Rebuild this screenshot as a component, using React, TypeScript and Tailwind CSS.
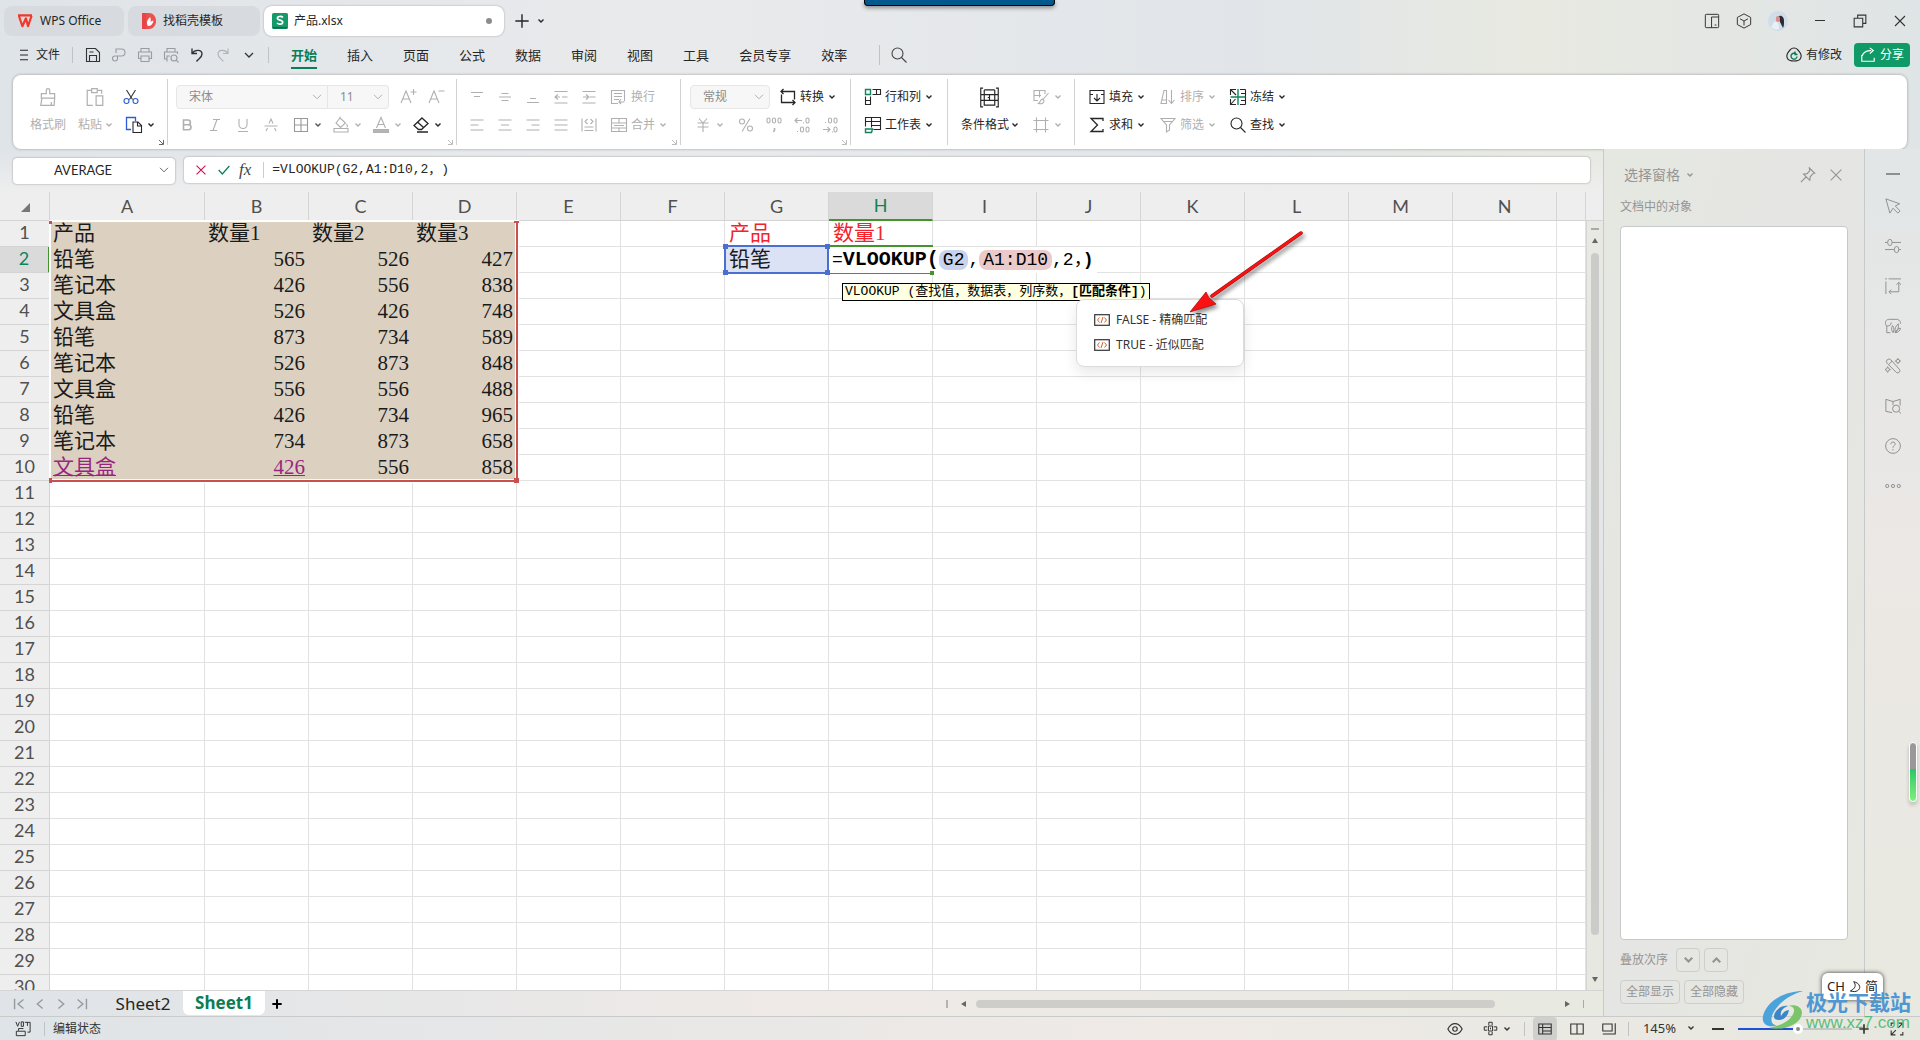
import React, { type ReactNode } from "react";

type IconProps = {
  children: ReactNode;
  className?: string;
};

const Icon = ({ children, className = "size-[18px]" }: IconProps) => (
  <svg
    viewBox="0 0 18 18"
    fill="none"
    stroke="currentColor"
    strokeWidth="1.1"
    className={`shrink-0 ${className}`}
    aria-hidden="true"
  >
    {children}
  </svg>
);

const Chevron = ({ className = "h-1 w-[6px]" }: { className?: string }) => (
  <svg
    viewBox="0 0 6 4"
    fill="none"
    stroke="currentColor"
    strokeWidth="1.4"
    className={`shrink-0 ${className}`}
    aria-hidden="true"
  >
    <path d="M.5.5 3 3 5.5.5" />
  </svg>
);

const WideChevron = () => (
  <svg
    viewBox="0 0 10 6"
    fill="none"
    stroke="currentColor"
    className="pointer-events-none absolute right-[6px] top-1/2 h-[6px] w-[10px] -translate-y-1/2"
    aria-hidden="true"
  >
    <path d="M1 .8 5 4.8 9 .8" />
  </svg>
);

const icons = {
  save: (
    <Icon>
      <path d="M2.5 2.5h9l4 4v9h-13zM5.5 15.500v-6h7v6M5.500 6h4" />
    </Icon>
  ),
  exportPdf: (
    <Icon>
      <path d="M6 7V3h5.500a3.500 3.500 0 0 1 0 7H5a2.500 2.500 0 1 0 2.500 2.500V10" />
    </Icon>
  ),
  print: (
    <Icon>
      <path d="M5 6V2.500h8V6M5 12.500H2.500V6h13v6.500H13M5 10h8v5.500H5z" />
    </Icon>
  ),
  preview: (
    <Icon>
      <path d="M5 6V2.500h8V6M5 13H2.500V6h13v2M5 15.500V10h3" />
      <circle cx="12" cy="12" r="3" />
      <path d="m14.200 14.200 2.300 2.300" />
    </Icon>
  ),
  undo: (
    <Icon>
      <path strokeWidth="1.4" d="M4 2.500v5h5M4 7.500C7 3 14 3.500 14 8c0 3.500-3 4.500-5.500 7.500" />
    </Icon>
  ),
  redo: (
    <Icon>
      <path d="M14 2.500v5H9M14 7.500C11 3 4 3.500 4 8c0 3.500 3 4.500 5.500 7.500" />
    </Icon>
  ),
  search: (
    <Icon>
      <circle cx="7.500" cy="7.500" r="5.500" />
      <path d="m11.500 11.500 5 5" />
    </Icon>
  ),
  brush: (
    <Icon className="size-5">
      <path d="M7.500 6V3a1.500 1.500 0 0 1 3 0v3h4.500v4H3V6zM3.500 10l-1 6.500h12l.5-6.500M12 16.500v-3" />
    </Icon>
  ),
  paste: (
    <Icon className="size-5">
      <path d="M6 3H2v13.500h5M6 1.500h5V5H6zM11 3h4v3M10 8h6v8.500h-6z" />
    </Icon>
  ),
  cut: (
    <Icon>
      <path d="m4.500 2 6 9.500M13.500 2l-6 9.500" stroke="#333" />
      <circle cx="4.500" cy="13" r="2.500" stroke="#2b5bd7" />
      <circle cx="13.500" cy="13" r="2.500" stroke="#2b5bd7" />
    </Icon>
  ),
  copy: (
    <Icon>
      <path d="M6 13.500H1.500v-12h9V5" stroke="#2b5bd7" strokeWidth="1.300" />
      <path d="M8 6h5l3.500 3.500v7H8zM12.500 6v4h4" />
    </Icon>
  ),
  growFont: (
    <Icon>
      <path d="M2 15 7 3l5 12M4 11h6M11.500 4h6M14.500 1v6" />
    </Icon>
  ),
  shrinkFont: (
    <Icon>
      <path d="M2 15 7 3l5 12M4 11h6M11.500 3h6" />
    </Icon>
  ),
  bold: (
    <Icon>
      <path strokeWidth="1.600" d="M5.500 4H10a2.300 2.300 0 0 1 0 4.800H5.500zM5.500 8.800h5a2.500 2.500 0 0 1 0 5h-5z" />
    </Icon>
  ),
  italic: (
    <Icon>
      <path d="M7 3.500h7M4 14.500h7M11 3.500l-4 11" />
    </Icon>
  ),
  underline: (
    <Icon>
      <path d="M5 3v5.500a4 4 0 0 0 8 0V3M4 15.500h10" />
    </Icon>
  ),
  strike: (
    <Icon>
      <path d="M2.500 10h13M7 7.500l2-4.500 2 4.500M5.500 12 4 15M12.500 12l1.500 3" />
    </Icon>
  ),
  borders: (
    <Icon>
      <path d="M2.500 2.500h13v13h-13zM9 2.500v13M2.500 9h13" />
    </Icon>
  ),
  fill: (
    <Icon>
      <path d="m8 2 5.500 5-5 4.500L4 7zM8 2V.5M14.500 8c1.500 2 1 3-.2 3M2 12.500h14v3.500H2z" />
    </Icon>
  ),
  fontColor: (
    <Icon>
      <path d="M4.500 12 9 1.500 13.500 12M6 8.500h6" />
      <path d="M1.500 13.500h15v3h-15z" fill="#b5b5b5" />
    </Icon>
  ),
  eraser: (
    <Icon>
      <path strokeWidth="1.300" d="m10 2 6 5.500-6.500 6H6.500L2 9.500zM5.500 6l6 5.500M5 16h11" />
    </Icon>
  ),
  top: (
    <Icon>
      <path d="M3 4.500h12M6 8.500h6" />
    </Icon>
  ),
  middle: (
    <Icon>
      <path d="M5.500 5.500h7M3 9h12M5.500 12.500h7" />
    </Icon>
  ),
  bottom: (
    <Icon>
      <path d="M6 10.500h6M3 14.500h12" />
    </Icon>
  ),
  outdent: (
    <Icon>
      <path d="M2.500 3.500h13M2.500 15h13M3 9h5M10 9h5.500M6 6.500 3 9l3 2.500" />
    </Icon>
  ),
  indent: (
    <Icon>
      <path d="M2.500 3.500h13M2.500 15h13M3 9h5M10 9h5.500M6 6.500 9 9l-3 2.500" />
    </Icon>
  ),
  wrap: (
    <Icon>
      <path d="M8 15.500H1.500v-13h13V13M4 5.500h8M4 8.500h8M4 11.500h5M11 11l-2 3h5.500M9 14l2 2" />
    </Icon>
  ),
  left: (
    <Icon>
      <path d="M2.500 4h13M2.500 9h8M2.500 14h13" />
    </Icon>
  ),
  center: (
    <Icon>
      <path d="M2.500 4h13M5 9h8M2.500 14h13" />
    </Icon>
  ),
  right: (
    <Icon>
      <path d="M2.500 4h13M7.500 9h8M2.500 14h13" />
    </Icon>
  ),
  justify: (
    <Icon>
      <path d="M2.500 4h13M2.500 9h13M2.500 14h13" />
    </Icon>
  ),
  distribute: (
    <Icon>
      <path d="M2 2.500v13M16 2.500v13M7.500 3 5 5.500 7.500 8M10.500 3 13 5.500 10.500 8M4.500 11h9M4.500 14.500h9" />
    </Icon>
  ),
  merge: (
    <Icon>
      <path d="M1.500 2.500h15v13h-15zM1.500 7h15M1.500 12h15M9 2.500V7M9 12v3.500M4 9.500h10" />
    </Icon>
  ),
  convert: (
    <Icon>
      <path strokeWidth="1.300" d="M4.500 1 2 3.500 4.500 6M2 3.500h13.500v8M2.500 6.500v8H16M13.500 12l2.500 2.500-2.500 2.500" />
    </Icon>
  ),
  yen: (
    <Icon>
      <path d="m5 2.500 4 4.500 4-4.500M3.500 7h11M3.500 11h11M9 7v9" />
    </Icon>
  ),
  percent: (
    <Icon>
      <circle cx="5" cy="5.500" r="2.500" />
      <circle cx="13" cy="12.500" r="2.500" />
      <path d="M13 2.500 5 15.500" />
    </Icon>
  ),
  comma: (
    <Icon>
      <rect x="2" y="2" width="3" height="5" rx="1.500" />
      <rect x="7.500" y="2" width="3" height="5" rx="1.500" />
      <rect x="13" y="2" width="3" height="5" rx="1.500" />
      <path strokeWidth="1.600" d="M9.500 12v2l-1 2" />
    </Icon>
  ),
  addDecimal: (
    <Icon>
      <path d="M2 4.500h7M4.500 2 2 4.500 4.500 7M4 15.500h1M10 7h1" />
      <rect x="13" y="2" width="3" height="5" rx="1.500" />
      <rect x="7.500" y="11" width="3" height="5" rx="1.500" />
      <rect x="13" y="11" width="3" height="5" rx="1.500" />
    </Icon>
  ),
  removeDecimal: (
    <Icon>
      <path d="M2 13.500h7M6.500 11 9 13.500 6.500 16M4 6.500h1M11 16h1" />
      <rect x="7.500" y="2" width="3" height="5" rx="1.500" />
      <rect x="13" y="2" width="3" height="5" rx="1.500" />
      <rect x="13" y="11" width="3" height="5" rx="1.500" />
    </Icon>
  ),
  rowsCols: (
    <Icon>
      <path d="M8.500 1.500h8v5h-8M12.500 1.500v5M1.500 8.500v8h5v-8M1.500 12.500h5" />
      <path d="M1.500 1.500h5v5h-5z" stroke="#12835a" strokeWidth="1.400" />
    </Icon>
  ),
  worksheet: (
    <Icon>
      <path d="M1.500 10.500v-9h15v12h-7M1.500 5.500h15M7.500 1.500v10M7.500 9.500h9" />
      <path d="M1.500 13h7l-1 3.500h-6z" stroke="#12835a" strokeWidth="1.400" />
    </Icon>
  ),
  condFormat: (
    <Icon className="size-[21px]">
      <path
        strokeWidth="1"
        d="M3.500 1h-2v16h2M14.500 1h2v16h-2M1.500 6.500h3M1.500 11.500h3M13.500 6.500h3M13.500 11.500h3M4.500 2.500h9M4.500 2.500v4h9v-4M4.500 6.500v5M13.500 6.500v5M9 6.500v2.500H7.500M9 9v2.500M4.500 11.500h9v4h-9z"
      />
    </Icon>
  ),
  tableStyle: (
    <Icon>
      <path d="M6 12.500H2v-10h11V6M2 7.500h7M7.500 2.500v7M16.500 5l-6 7M10.500 11c-2 0-2 3.500-4 4.500 3.500 1 5.500-.5 5.500-3z" />
    </Icon>
  ),
  cells: (
    <Icon>
      <path d="M4.500 1.500v15M13.500 1.500v15M1.500 4.500h15M1.500 13.500h15" />
    </Icon>
  ),
  fillDown: (
    <Icon>
      <path d="M5 6.500H2v-4h14v4h-3M2 6.500v9h14v-9M9 6v7M6 10l3 3 3-3" />
    </Icon>
  ),
  sum: (
    <Icon>
      <path strokeWidth="1.300" d="M15 5V2.500H3L9.500 9 3 15.500h12V13" />
    </Icon>
  ),
  sort: (
    <Icon>
      <path d="M2 15.500h5.500V2.500H5zM2.500 12h5M12.500 2v13M9.500 12l3 3.500 3-3.500" />
    </Icon>
  ),
  filter: (
    <Icon>
      <path d="M2 2.500h14L10.500 9v5l-3 2V9zM4 5.500h10" />
    </Icon>
  ),
  freeze: (
    <Icon>
      <path d="M7 1.500H1.500V7M1.500 11v5.500H7M11 1.500h5.500M16.500 16.500H11M2 2l5 5M2 16l4.500-5M12 5.500h4.500M12 12.500h4.500M16.500 1.500v15" />
      <path d="M1.500 9h15M9 1v16" stroke="#12835a" strokeWidth="1.400" />
    </Icon>
  ),
};

const iconButtonClass = "flex h-7 w-7 items-center justify-center";

type IconButtonProps = { icon: ReactNode; label: string };

const IconButton = ({ icon, label }: IconButtonProps) => (
  <button aria-label={label} className={iconButtonClass}>
    {icon}
  </button>
);

const DropButton = ({ icon, label }: IconButtonProps) => (
  <button aria-label={label} className="flex h-7 w-10 items-center gap-[5px] pl-[7px]">
    {icon}
    <Chevron />
  </button>
);

type LabelButtonProps = {
  icon: ReactNode;
  label: string;
  dim?: boolean;
  drop?: boolean;
};

const LabelButton = ({ icon, label, dim = false, drop = true }: LabelButtonProps) => (
  <button
    className={`flex h-7 items-center gap-[3px] whitespace-nowrap ${
      dim ? "text-[#b0b0b0]" : "text-[#262626]"
    }`}
  >
    {icon}
    <span>{label}</span>
    {drop && <Chevron className="ml-[2px] h-1 w-[6px]" />}
  </button>
);

type RibbonGroupProps = {
  children: ReactNode;
  className: string;
  launcher?: "dark" | "light";
  last?: boolean;
};

const RibbonGroup = ({ children, className, launcher, last }: RibbonGroupProps) => (
  <div className="relative flex">
    <div className={`flex pt-2 ${className}`}>{children}</div>
    {!last && <div className="my-1 w-px bg-[#d2d2d2]" />}
    {launcher && (
      <svg
        viewBox="0 0 6 6"
        fill="none"
        stroke="currentColor"
        className={`absolute bottom-1 right-1 size-[6px] ${
          launcher === "dark" ? "text-[#666]" : "text-[#bbb]"
        }`}
        aria-hidden="true"
      >
        <path d="M1 1l4 4M5.500 1v4.500H1" />
      </svg>
    )}
  </div>
);

const TitleBar = () => (
  <header className="relative flex h-10 items-center gap-1 pl-1 pt-px text-xs text-[#262626]">
    <button className="flex h-[30px] w-[120px] items-center gap-[7px] rounded-lg bg-[#d7dade] pl-[13px]">
      <svg viewBox="0 0 18 16" className="h-[14px] w-4" fill="none" strokeWidth="2.500" aria-hidden="true">
        <path d="M1 1.500h16M2 2l4 12L10 5l2.500 9L16.500 2" stroke="#f0382b" strokeLinejoin="round" />
      </svg>
      WPS Office
    </button>
    <button className="flex h-[30px] w-[132px] items-center gap-[6px] rounded-lg bg-[#d7dade] pl-[13px]">
      <svg viewBox="0 0 16 16" className="size-4" aria-hidden="true">
        <path d="M1 0h7c4 0 7 3.500 7 8s-3 8-7 8H1z" fill="#ee4f4f" />
        <path d="M5 16V0H1v16z" fill="#e23c42" opacity=".5" />
        <path d="M7 13c-2-3-1-6 2-9 1 2 1 3 .5 5 1-1 2-1.500 3-1.500-.5 3.500-2.500 5-4.500 5.500z" fill="#fff" />
      </svg>
      找稻壳模板
    </button>
    <button className="flex h-[30px] w-[240px] items-center gap-[6px] rounded-lg bg-white pl-2 pr-3 shadow-[0_0_2px_#999]">
      <svg viewBox="0 0 16 16" className="size-4" aria-hidden="true">
        <rect width="16" height="16" rx="1.500" fill="#15996a" />
        <path d="M1 14h14v1.500H1z" fill="#0b6b48" />
        <path
          d="M11 4.500C9.500 3 5.200 3 5.400 5.400 5.600 7.800 10.700 6.500 10.700 9.300c0 2.400-4.200 2.300-5.700.7"
          fill="none"
          stroke="#fff"
          strokeWidth="1.700"
        />
      </svg>
      产品.xlsx
      <span className="ml-auto size-[6px] rounded-full bg-[#8c8c8c]" />
    </button>
    <button aria-label="新建" className="ml-[6px] flex size-4 items-center justify-center">
      <Icon className="size-4">
        <path strokeWidth="1.600" d="M9 1.500v15M1.500 9h15" />
      </Icon>
    </button>
    <button aria-label="标签列表" className="p-1">
      <Chevron />
    </button>
    <div className="absolute left-[45%] top-0 h-[6px] w-[191px] rounded-b border border-t-0 border-black bg-[#00588c] shadow-[0_2px_4px_#888]" />
    <div className="ml-auto flex items-center text-[#333]">
      <button aria-label="侧栏" className="flex h-7 w-8 items-center justify-center">
        <Icon className="size-4">
          <rect x="1.500" y="1.500" width="15" height="15" rx="1" />
          <path d="M8.500 16.500v-12h8M12 13.500h2" />
        </Icon>
      </button>
      <button aria-label="应用" className="flex h-7 w-8 items-center justify-center">
        <Icon className="size-4">
          <path d="m9 1 7.500 4v8L9 17l-7.500-4V5zM4.500 6.500 9 9l4.500-2.500M9 9v5" />
        </Icon>
      </button>
      <button aria-label="账户" className="flex h-7 w-9 items-center justify-center">
        <svg viewBox="0 0 20 20" className="size-5" aria-hidden="true">
          <circle cx="10" cy="10" r="10" fill="#cfdde9" />
          <path d="M10 6c3-3 6 0 6 4 0 3 0 5-1 7l-3-6z" fill="#2e2a35" />
          <path d="M8 6c2-2 4-1 4 2s-2 4-4 2z" fill="#d98f8c" />
          <path d="M6 11c3-1 5 1 5 7-3 1-6 0-8-2z" fill="#e8f0f6" />
        </svg>
      </button>
      <button aria-label="最小化" className="ml-1 flex h-7 w-10 items-center justify-center">
        <span className="h-px w-[10px] bg-[#333]" />
      </button>
      <button aria-label="还原" className="flex h-7 w-10 items-center justify-center">
        <Icon className="size-[14px]">
          <path d="M1.500 5.500h11v11h-11zM6 5.500v-4h10.500V12h-4" strokeWidth="1.400" />
        </Icon>
      </button>
      <button aria-label="关闭" className="flex h-7 w-10 items-center justify-center">
        <Icon className="size-3">
          <path d="m1.500 1.500 15 15M16.500 1.500l-15 15" strokeWidth="1.600" />
        </Icon>
      </button>
    </div>
  </header>
);

const menuTabs = ["开始", "插入", "页面", "公式", "数据", "审阅", "视图", "工具", "会员专享", "效率"];

const MenuBar = () => (
  <div className="flex h-[35px] items-start pl-[18px] pr-[10px] text-[#262626]">
    <button className="flex h-[30px] w-[54px] items-center gap-[6px] text-xs">
      <Icon className="size-3">
        <path strokeWidth="1.600" d="M3 2h12M3 9h12M3 16h12" />
      </Icon>
      <span className="whitespace-nowrap">文件</span>
    </button>
    <div className="my-[7px] h-4 w-px bg-[#bfc2c6]" />
    <div className="flex h-[30px] items-center gap-[8px] pl-[11px] text-[#333]">
      <button aria-label="保存">{icons.save}</button>
      <button aria-label="输出为PDF" className="text-[#9a9ca0]">{icons.exportPdf}</button>
      <button aria-label="打印" className="text-[#9a9ca0]">{icons.print}</button>
      <button aria-label="打印预览" className="text-[#9a9ca0]">{icons.preview}</button>
      <button aria-label="撤销">{icons.undo}</button>
      <button aria-label="恢复" className="text-[#b0b2b6]">{icons.redo}</button>
      <button aria-label="更多" className="flex w-[18px] justify-center">
        <svg viewBox="0 0 10 6" fill="none" stroke="currentColor" strokeWidth="1.300" className="w-[10px]">
          <path d="M1 1l4 4 4-4" />
        </svg>
      </button>
    </div>
    <div className="my-[7px] ml-[10px] h-4 w-px bg-[#bfc2c6]" />
    <nav className="flex h-[30px] items-center gap-[30px] pl-[22px] pr-[32px] text-[13px]">
      {menuTabs.map((tab) => (
        <a
          key={tab}
          href="#"
          className={`whitespace-nowrap border-b-2 pt-px leading-6 ${
            tab === "开始" ? "border-[#0b7d55] font-bold text-[#0b7d55]" : "border-transparent"
          }`}
        >
          {tab}
        </a>
      ))}
    </nav>
    <div className="my-[5px] h-5 w-px bg-[#bfc2c6]" />
    <button aria-label="搜索" className="ml-[10px] flex h-[30px] items-center text-[#444]">
      {icons.search}
    </button>
    <div className="ml-auto flex h-[30px] items-center text-xs">
      <button className="flex items-center gap-[3px]">
        <Icon>
          <path d="M5.500 3.500C7 1.500 11 1.500 12.500 3.500c3 3 4.500 6.500 3 9-1 2-2.500 2.500-6.500 2.500s-5.500-.5-6.500-2.500c-1.500-2.500 0-6 3-9z" />
          <path d="M11.500 8.500a3 3 0 1 0 .5 2M10 5.500v3h2.500" stroke="#0b7d55" strokeWidth="1.400" />
        </Icon>
        有修改
      </button>
      <button className="ml-3 flex h-6 w-14 items-center gap-1 rounded bg-[#0f9a68] pl-[6px] text-white">
        <Icon className="size-4">
          <path d="M2 9v7h14v-4M2.500 10c1-4 5-6 10-6M11 1l4 3-4 3.500" strokeWidth="1.300" />
        </Icon>
        分享
      </button>
    </div>
  </div>
);

const selectClass =
  "h-6 w-full appearance-none border border-[#e6e6e6] bg-[#f7f7f7] pl-3 text-xs text-[#8c8c8c] outline-none";

const Ribbon = () => (
  <div className="mx-[13px] flex h-[74px] rounded-lg bg-white text-xs text-[#b0b0b0] shadow-[0_0_3px_#9a9a9a]">
    <RibbonGroup className="pl-[10px] pr-[11px]" launcher="dark">
      <button className="flex h-14 w-[50px] flex-col items-center">
        <span className="flex h-7 items-center">{icons.brush}</span>
        <span className="leading-7">格式刷</span>
      </button>
      <button className="flex h-14 w-11 flex-col items-center">
        <span className="flex h-7 items-center">{icons.paste}</span>
        <span className="flex items-center gap-1 leading-7">
          粘贴
          <Chevron />
        </span>
      </button>
      <div className="ml-[5px] flex w-[34px] flex-col text-[#262626]">
        <button aria-label="剪切" className="flex h-7 items-center">
          {icons.cut}
        </button>
        <button aria-label="复制" className="flex h-7 items-center gap-[5px] pl-[3px]">
          {icons.copy}
          <Chevron />
        </button>
      </div>
    </RibbonGroup>

    <RibbonGroup className="flex-col pl-[5px] pr-[6px]" launcher="light">
      <div className="flex h-7 items-center pl-[3px]">
        <label className="relative w-[152px]">
          <select aria-label="字体" className={`${selectClass} rounded-l`}>
            <option>宋体</option>
          </select>
          <WideChevron />
        </label>
        <label className="relative mr-[5px] w-[61px]">
          <select aria-label="字号" className={`${selectClass} rounded-r border-l-0`}>
            <option>11</option>
          </select>
          <WideChevron />
        </label>
        <IconButton icon={icons.growFont} label="增大字号" />
        <IconButton icon={icons.shrinkFont} label="减小字号" />
      </div>
      <div className="flex">
        <IconButton icon={icons.bold} label="加粗" />
        <IconButton icon={icons.italic} label="倾斜" />
        <IconButton icon={icons.underline} label="下划线" />
        <IconButton icon={icons.strike} label="删除线" />
        <span className="text-[#555]">
          <DropButton icon={<span className="text-[#999]">{icons.borders}</span>} label="边框" />
        </span>
        <DropButton icon={icons.fill} label="填充颜色" />
        <DropButton icon={icons.fontColor} label="字体颜色" />
        <span className="text-[#262626]">
          <DropButton icon={icons.eraser} label="清除" />
        </span>
      </div>
    </RibbonGroup>

    <RibbonGroup className="flex-col pl-[6px] pr-[14px]" launcher="light">
      <div className="flex">
        <IconButton icon={icons.top} label="顶端对齐" />
        <IconButton icon={icons.middle} label="垂直居中" />
        <IconButton icon={icons.bottom} label="底端对齐" />
        <IconButton icon={icons.outdent} label="减少缩进" />
        <IconButton icon={icons.indent} label="增加缩进" />
        <div className="ml-[7px]">
          <LabelButton icon={icons.wrap} label="换行" dim drop={false} />
        </div>
      </div>
      <div className="flex">
        <IconButton icon={icons.left} label="左对齐" />
        <IconButton icon={icons.center} label="居中" />
        <IconButton icon={icons.right} label="右对齐" />
        <IconButton icon={icons.justify} label="两端对齐" />
        <IconButton icon={icons.distribute} label="分散对齐" />
        <div className="ml-[7px]">
          <LabelButton icon={icons.merge} label="合并" dim />
        </div>
      </div>
    </RibbonGroup>

    <RibbonGroup className="flex-col pl-[6px] pr-[6px]" launcher="light">
      <div className="flex items-center pl-[3px]">
        <label className="relative mr-[9px] w-20">
          <select aria-label="数字格式" className={`${selectClass} rounded`}>
            <option>常规</option>
          </select>
          <WideChevron />
        </label>
        <LabelButton icon={icons.convert} label="转换" />
      </div>
      <div className="flex">
        <DropButton icon={icons.yen} label="货币" />
        <div className="ml-[5px] flex">
          <IconButton icon={icons.percent} label="百分比" />
          <IconButton icon={icons.comma} label="千位分隔" />
          <IconButton icon={icons.addDecimal} label="增加小数位" />
          <IconButton icon={icons.removeDecimal} label="减少小数位" />
        </div>
      </div>
    </RibbonGroup>

    <RibbonGroup className="flex-col pl-[13px] pr-[15px]">
      <LabelButton icon={icons.rowsCols} label="行和列" />
      <LabelButton icon={icons.worksheet} label="工作表" />
    </RibbonGroup>

    <RibbonGroup className="pl-[13px] pr-[9px]">
      <button className="flex h-14 flex-col items-center text-[#262626]">
        <span className="flex h-7 items-center">{icons.condFormat}</span>
        <span className="flex items-center gap-[3px] leading-7">
          条件格式
          <Chevron />
        </span>
      </button>
      <div className="ml-[7px]">
        <DropButton icon={icons.tableStyle} label="表格样式" />
        <DropButton icon={icons.cells} label="单元格" />
      </div>
    </RibbonGroup>

    <RibbonGroup className="pl-[13px]" last>
      <div className="w-[71px]">
        <LabelButton icon={icons.fillDown} label="填充" />
        <LabelButton icon={icons.sum} label="求和" />
      </div>
      <div className="w-[70px]">
        <LabelButton icon={icons.sort} label="排序" dim />
        <LabelButton icon={icons.filter} label="筛选" dim />
      </div>
      <div className="w-[70px]">
        <LabelButton icon={icons.freeze} label="冻结" />
        <LabelButton icon={icons.search} label="查找" />
      </div>
    </RibbonGroup>
  </div>
);

const FormulaBar = () => (
  <div className="flex gap-[9px] px-[13px] pb-1 pt-2">
    <label className="relative w-[162px] text-[#666]">
      <select
        aria-label="名称框"
        className="h-[26px] w-full appearance-none rounded bg-white pl-[41px] font-[Lato] text-[13px] text-[#262626] shadow-[0_0_2px_#888] outline-none"
      >
        <option>AVERAGE</option>
      </select>
      <WideChevron />
    </label>
    <div className="flex h-[26px] flex-1 items-center rounded bg-white pl-3 shadow-[0_0_2px_#888]">
      <button aria-label="取消" className="text-[#d0104c]">
        <Icon className="size-[10px]">
          <path d="m1 1 16 16M17 1 1 17" strokeWidth="2" />
        </Icon>
      </button>
      <button aria-label="输入" className="ml-3 text-[#128257]">
        <Icon className="size-3">
          <path d="m1 9 5.500 6L17 3" strokeWidth="2" />
        </Icon>
      </button>
      <button aria-label="插入函数" className="ml-[9px] font-['Liberation_Serif',serif] text-[17px] italic leading-6 text-[#444]">
        fx
      </button>
      <span className="ml-3 h-4 w-px bg-[#ccc]" />
      <input
        aria-label="编辑栏"
        defaultValue="=VLOOKUP(G2,A1:D10,2，)"
        className="ml-2 flex-1 bg-transparent font-['Liberation_Mono','Noto_Sans_CJK_SC',monospace] text-[13px] text-[#262626] outline-none [text-spacing-trim:space-all]"
      />
    </div>
  </div>
);

const columns = ["A", "B", "C", "D", "E", "F", "G", "H", "I", "J", "K", "L", "M", "N", ""];

const sheetData: string[][] = [
  ["产品", "数量1", "数量2", "数量3"],
  ["铅笔", "565", "526", "427"],
  ["笔记本", "426", "556", "838"],
  ["文具盒", "526", "426", "748"],
  ["铅笔", "873", "734", "589"],
  ["笔记本", "526", "873", "848"],
  ["文具盒", "556", "556", "488"],
  ["铅笔", "426", "734", "965"],
  ["笔记本", "734", "873", "658"],
  ["文具盒", "426", "556", "858"],
];

const lookupCells: Record<string, string> = { G1: "产品", H1: "数量1", G2: "铅笔" };

const SheetCell = ({ row, col }: { row: number; col: number }) => {
  const value = sheetData[row]?.[col];
  if (value !== undefined) {
    const linked = row === 9 && col < 2;
    return (
      <td
        className={`h-[26px] border-b border-r border-[#dcd0c0] bg-[#dcd0c0] px-[3px] py-0 leading-[25px] ${
          row > 0 && col > 0 ? "text-right" : ""
        }`}
      >
        {linked ? (
          <a href="#" className="text-[#9a2580] underline decoration-1">
            {value}
          </a>
        ) : (
          value
        )}
      </td>
    );
  }

  const name = `${columns[col]}${row + 1}`;
  return (
    <td
      className={`h-[26px] border-b border-r border-[#e2e2e2] px-[4px] py-0 leading-[25px] ${
        name === "G2" ? "bg-[#dbe2f5]" : ""
      } ${row === 0 ? "text-[#f5222d]" : ""}`}
    >
      {lookupCells[name]}
    </td>
  );
};

const handles = [
  "left-[-3px] top-[-3px]",
  "right-[-3px] top-[-3px]",
  "bottom-[-3px] left-[-3px]",
  "bottom-[-3px] right-[-3px]",
];

const CodeIcon = () => (
  <svg viewBox="0 0 16 12" fill="none" className="h-3 w-4" aria-hidden="true">
    <rect x=".7" y=".7" width="14.600" height="10.600" stroke="#333" strokeWidth="1.200" />
    <path d="M5.500 3.500 3.500 6l2 2.500M10.500 3.500l2 2.500-2 2.500M9 3 7 9" stroke="#d4622a" />
  </svg>
);

const Sheet = () => (
  <div className="relative min-w-0 flex-1 overflow-hidden bg-white font-['Liberation_Serif','Noto_Sans_CJK_SC',serif] text-[21px] text-[#1a1a1a]">
    <table className="w-full table-fixed border-separate border-spacing-0">
      <colgroup>
        <col className="w-[50px]" />
        <col className="w-[155px]" />
        {columns.slice(1, -1).map((name) => (
          <col key={name} className="w-[104px]" />
        ))}
        <col />
      </colgroup>
      <thead className="font-[Lato] text-lg leading-6">
        <tr>
          <th aria-label="全选" className="h-[29px] border-b border-r border-[#d4d4d4] bg-[#eee] p-0">
            <svg viewBox="0 0 9 9" className="ml-[21px] mt-1 size-[9px]" aria-hidden="true">
              <path d="M9 0v9H0z" fill="#777" />
            </svg>
          </th>
          {columns.map((name) => (
            <th
              key={name}
              className={`h-[29px] border-r border-[#d4d4d4] p-0 font-normal ${
                name === "H"
                  ? "border-b-2 border-b-[#43942a] bg-[#dadada] text-[#128257]"
                  : "border-b bg-[#eee] text-[#505050]"
              }`}
            >
              {name}
            </th>
          ))}
        </tr>
      </thead>
      <tbody>
        {Array.from({ length: 30 }, (_, row) => (
          <tr key={row}>
            <th
              className={`h-[26px] border-b p-0 align-top font-[Lato] text-lg font-normal leading-[22px] ${
                row === 1
                  ? "border-b-[#d4d4d4] border-r-2 border-r-[#43942a] bg-[#dadada] text-[#128257]"
                  : "border-r border-[#d4d4d4] bg-[#eee] text-[#505050]"
              }`}
            >
              {row + 1}
            </th>
            {columns.map((_, col) => (
              <SheetCell key={col} row={row} col={col} />
            ))}
          </tr>
        ))}
      </tbody>
    </table>

    {/* referenced ranges */}
    <div className="pointer-events-none absolute left-[50px] top-[29px] h-[261px] w-[468px] border-b-2 border-r-2 border-[#c85050] outline-1 outline-white">
      <div className="h-full border border-white" />
      <span className="absolute left-[-1px] top-0 size-[3px] bg-[#c85050]" />
      <span className="absolute right-[-3px] top-0 h-[2px] w-[5px] bg-[#c85050]" />
      <span className="absolute bottom-[-3px] left-[-1px] h-[5px] w-[3px] bg-[#c85050]" />
      <span className="absolute bottom-[-3px] right-[-3px] size-[5px] bg-[#c85050]" />
    </div>

    {/* in-cell editor */}
    <div className="absolute left-[828px] top-[53px] h-[29px] w-[105px] border-y-2 border-[#43942a]">
      <span className="absolute bottom-[-3px] right-[-1px] size-1 bg-[#43942a]" />
      <div
        role="textbox"
        aria-label="单元格编辑"
        className="w-max whitespace-pre bg-white px-1 font-['Liberation_Mono','Noto_Sans_CJK_SC',monospace] text-lg leading-[25px] text-black"
      >
        =<b className="text-xl leading-[25px]">VLOOKUP(</b>
        <span className="rounded-lg bg-[#c8d3f0] px-1">G2</span>
        ,
        <span className="rounded-lg bg-[#ebcaca] px-1">A1:D10</span>
        ,2，
        <b>)</b>
      </div>
    </div>

    <div className="pointer-events-none absolute left-[724px] top-[53px] h-[29px] w-[105px] border-2 border-[#4a6fd0]">
      {handles.map((position) => (
        <span key={position} className={`absolute size-[5px] bg-[#4a6fd0] ${position}`} />
      ))}
    </div>

    <div
      role="tooltip"
      className="absolute left-[842px] top-[91px] whitespace-pre border border-black bg-[#ffffe1] px-[2px] font-['Liberation_Mono','Noto_Sans_CJK_SC',monospace] text-[13px] leading-4 text-black"
    >
      VLOOKUP (查找值，数据表，列序数，<b>[匹配条件]</b>)
    </div>

    <ul className="absolute left-[1076px] top-[107px] w-[168px] rounded-lg border border-[#dcdcdc] bg-white py-2 font-['Noto_Sans','Noto_Sans_CJK_SC',sans-serif] text-xs text-[#333] shadow-[0_6px_14px_#00000018]">
      {["FALSE - 精确匹配", "TRUE - 近似匹配"].map((option) => (
        <li key={option}>
          <button className="flex h-[25px] w-full items-center gap-[6px] pl-[17px]">
            <CodeIcon />
            {option}
          </button>
        </li>
      ))}
    </ul>

    <svg
      viewBox="0 0 130 96"
      className="pointer-events-none absolute left-[1180px] top-[33px] h-24 w-[130px] drop-shadow-[2px_3px_2px_#0007]"
      aria-hidden="true"
    >
      <path d="M121 8 32 71" stroke="#9c1010" strokeWidth="3.500" strokeLinecap="round" />
      <path d="M121 8 32 71" stroke="#fb1111" strokeWidth="2.500" strokeLinecap="round" />
      <path d="M10 87 26 67l3 6 7 6z" fill="#fb1111" stroke="#b01010" strokeWidth=".8" />
    </svg>
  </div>
);

const VerticalScroll = () => (
  <div className="flex w-[17px] flex-col items-center border-l border-t border-[#d4d4d4] bg-linear-to-b from-[#e8e9e2] via-[#e2e6e8] to-[#e7e8e0] pt-[7px] text-[#666]">
    <span className="h-[2px] w-2 bg-[#aaa]" />
    <svg viewBox="0 0 6 5" className="mb-[10px] mt-2 h-[5px] w-[6px]" aria-hidden="true">
      <path d="M3 0 6 5H0z" fill="currentColor" />
    </svg>
    <span className="w-2 flex-1 rounded bg-[#cbccc9]" />
    <svg viewBox="0 0 6 5" className="mb-[8px] mt-[42px] h-[5px] w-[6px]" aria-hidden="true">
      <path d="M3 5 6 0H0z" fill="currentColor" />
    </svg>
  </div>
);

const navPaths = ["M4 3v12M14 4 8 9l6 5", "M12 4 6 9l6 5", "m6 4 6 5-6 5", "M14 3v12M4 4l6 5-6 5"];
const navLabels = ["第一个工作表", "上一个工作表", "下一个工作表", "最后一个工作表"];

const SheetTabs = () => (
  <div className="flex h-[26px] items-center border-t border-[#d4d6d6] bg-linear-to-r from-[#dfe4e8] via-[#efeae7] to-[#e8e9e1] text-[17px]">
    <div className="flex w-[103px] gap-[5px] pl-[11px] text-[#9a9a9a]">
      {navPaths.map((path, index) => (
        <button key={path} aria-label={navLabels[index]}>
          <Icon className="size-4">
            <path d={path} strokeWidth="1.600" />
          </Icon>
        </button>
      ))}
    </div>
    <button className="w-20 text-center leading-6 text-[#262626]">Sheet2</button>
    <button className="h-6 w-[82px] self-start rounded-b-md bg-white text-center font-bold leading-[22px] text-[#0b7d55]">
      Sheet1
    </button>
    <button aria-label="新建工作表" className="ml-[6px]">
      <Icon className="size-3">
        <path d="M9 2v14M2 9h14" strokeWidth="3" />
      </Icon>
    </button>
    <div className="ml-auto flex w-[41%] items-center text-[#666]">
      <span className="h-2 w-[2px] bg-[#b5b3b0]" />
      <svg viewBox="0 0 5 6" className="ml-[13px] h-[6px] w-[5px]" aria-hidden="true">
        <path d="M0 3 5 0v6z" fill="currentColor" />
      </svg>
      <span className="ml-[10px] h-2 flex-1 rounded bg-[#cfcdc9]" />
      <svg viewBox="0 0 5 6" className="ml-[70px] h-[6px] w-[5px]" aria-hidden="true">
        <path d="M5 3 0 0v6z" fill="currentColor" />
      </svg>
      <span className="ml-[13px] mr-[19px] h-2 w-px bg-[#aaa]" />
    </div>
  </div>
);

const paneButton = "flex h-6 items-center justify-center rounded border border-[#cdcfca]";

const SelectionPane = () => (
  <aside className="flex w-[262px] shrink-0 flex-col border-l border-r border-[#c6cacb] bg-linear-to-br from-[#e5e8e1] via-[#e5e5e4] to-[#e7e8df] px-4 pb-3 pt-4 text-xs text-[#949494]">
    <div className="flex h-5 items-center pl-1">
      <h2 className="text-sm">选择窗格</h2>
      <Chevron className="ml-[7px] h-1 w-[6px]" />
      <button aria-label="固定" className="ml-auto">
        <Icon className="size-4">
          <path d="m10.500 1 6 6-2 .5-3 3.500-.5 4-7-7 4-.5L11 4zM7 11l-6 6" strokeWidth="1.300" />
        </Icon>
      </button>
      <button aria-label="关闭窗格" className="ml-[14px] mr-[6px]">
        <Icon className="size-3">
          <path d="m1 1 16 16M17 1 1 17" strokeWidth="1.600" />
        </Icon>
      </button>
    </div>
    <h3 className="mt-3 leading-5">文档中的对象</h3>
    <div className="mt-[9px] flex-1 rounded border border-[#c6cacb] bg-white" />
    <div className="mt-2 flex items-center gap-1">
      <span className="mr-1">叠放次序</span>
      <button aria-label="下移" className={`${paneButton} w-6`}>
        <Chevron className="h-[6px] w-[9px]" />
      </button>
      <button aria-label="上移" className={`${paneButton} w-6`}>
        <Chevron className="h-[6px] w-[9px] rotate-180" />
      </button>
    </div>
    <div className="mt-2 flex gap-1">
      <button className={`${paneButton} w-[60px]`}>全部显示</button>
      <button className={`${paneButton} w-[60px]`}>全部隐藏</button>
    </div>
  </aside>
);

const railIcons: { label: string; drawing: ReactNode }[] = [
  { label: "选择", drawing: <path d="m1 1 15.500 5.500-5 2.500 5.500 5.500-2.500 2.500L9 11.500 5.500 17z" /> },
  {
    label: "属性",
    drawing: (
      <>
        <path d="M0 5h3M8 5h10M0 13h10.500M15.500 13H18" />
        <ellipse cx="5.500" cy="5" rx="2.500" ry="3.500" />
        <ellipse cx="13" cy="13" rx="2.500" ry="3.500" />
      </>
    ),
  },
  {
    label: "转换",
    drawing: <path d="M1 4v14M4 1h14M0 1h2M15.500 5v10.500H4.500M13 7.500 15.500 5 18 7.500M7 13l-2.500 2.500L7 18" />,
  },
  {
    label: "图片",
    drawing: (
      <path d="M6 16.500H2V9C-.5 7 0 2 4 1.500h10c3 1 3.500 3 3.500 5M2 9c3 0 5-1 5-4M9 16.500c-2-3-2-5-.5-8 2 3 2 5 .5 8zM11.500 16.500c-1-5 1-8 3.500-10 .5 5-.5 8-3.500 10zM11.500 16.500c1-3 3.500-5 6-5-.5 3-3 5-6 5z" />
    ),
  },
  {
    label: "工具",
    drawing: (
      <>
        <path d="M2.500 6A2.500 2.500 0 0 1 6.500 2L16 12.500a2 2 0 0 1-3.500 3.500zM4 7.500 8 3.500" />
        <circle cx="14.500" cy="3.500" r="2" />
        <circle cx="3" cy="13" r="2" />
        <path d="M14.500 0v1.500M14.500 5.500V7M11 3.500h1.500M16.500 3.500H18M3 9.500V11M3 15v1.500M0 13h1M5 13h1.500" />
      </>
    ),
  },
  {
    label: "查阅",
    drawing: (
      <>
        <path d="M8 16.500 1 15V1.500L9 4l8-2.500v7M9 4v4" />
        <circle cx="12.500" cy="12" r="4" />
        <path d="m15.500 15 2.500 2.500" />
      </>
    ),
  },
  {
    label: "帮助",
    drawing: (
      <>
        <circle cx="9" cy="9" r="8.300" />
        <path d="M6.500 7c0-3.500 5-3 5-.5C11.500 8.500 9 8.500 9 11M9 12.500V14" />
      </>
    ),
  },
  {
    label: "更多",
    drawing: (
      <>
        <circle cx="2.500" cy="9" r="1.800" />
        <circle cx="9" cy="9" r="1.800" />
        <circle cx="15.500" cy="9" r="1.800" />
      </>
    ),
  },
];

const SideRail = () => (
  <div className="relative flex w-[55px] shrink-0 flex-col items-center bg-linear-to-b from-[#e2e6e7] via-[#ece8e5] to-[#e8e9e0] pt-6 text-[#8f8f8f]">
    <button aria-label="收起" className="h-[2px] w-[14px] bg-[#8f8f8f]" />
    <div className="mt-[21px] flex flex-col gap-5">
      {railIcons.map(({ label, drawing }) => (
        <button key={label} aria-label={label} className="flex h-5 items-center justify-center">
          <Icon className="size-4">{drawing}</Icon>
        </button>
      ))}
    </div>
    <div className="absolute right-[3px] top-[593px] h-[60px] w-2 rounded border border-white bg-linear-to-b from-[#999] from-45% via-[#25c765] via-45% to-[#7cf07c] shadow-[0_3px_4px_#0003]" />
  </div>
);

const StatusBar = () => (
  <footer className="relative flex h-6 items-center border-t border-[#c9cbcb] bg-linear-to-r from-[#dfe4e8] via-[#efeae6] via-60% to-[#e6e8e0] pr-4 text-xs text-[#333]">
    <Icon className="ml-[15px] size-4">
      <path d="m1 1 2 5 2-5M7 1v5h2.500V1zM11 1.500h6v11h-3M14 1.500v4M1.500 16.500v-5h10v5zM4 11V8.500h5.500" />
    </Icon>
    <span className="ml-[13px] h-[14px] w-px bg-[#c0c2c4]" />
    <span className="ml-2">编辑状态</span>
    <div className="ml-auto flex items-center">
      <button aria-label="护眼模式">
        <Icon className="size-4">
          <path d="M1 9c4-8 12-8 16 0-4 8-12 8-16 0z" strokeWidth="1.300" />
          <circle cx="9" cy="9" r="2.500" strokeWidth="1.300" />
        </Icon>
      </button>
      <button aria-label="阅读模式" className="ml-5 flex items-center gap-[6px]">
        <Icon className="size-[15px]">
          <path d="M7 5V1.500h4V5M7 13v3.500h4V13M5 7H1.500v4H5M13 7h3.500v4H13M6.500 6h5v6h-5zM9 8v2" strokeWidth="1.200" />
        </Icon>
        <Chevron />
      </button>
      <span className="ml-[14px] h-[14px] w-px bg-[#c0c2c4]" />
      <button aria-label="普通视图" className="ml-2 flex size-6 items-center justify-center rounded bg-[#cfd0cb]">
        <Icon className="size-[14px]">
          <path d="M1 2.500h16v13H1zM1 7h16M6 2.500v13M6 11.500h11" strokeWidth="1.400" />
        </Icon>
      </button>
      <button aria-label="页面布局" className="ml-[13px]">
        <Icon className="size-[14px]">
          <path d="M1 2.500h16v13H1zM9 2.500v13" strokeWidth="1.400" />
        </Icon>
      </button>
      <button aria-label="分页预览" className="ml-[18px]">
        <Icon className="size-[14px]">
          <path d="M1 2.500h12v9H1zM1 15.500h16v-14" strokeWidth="1.400" />
        </Icon>
      </button>
      <span className="ml-3 h-[14px] w-px bg-[#c0c2c4]" />
      <button className="ml-[14px] flex items-center gap-3 text-[13px]">
        145%
        <Chevron />
      </button>
      <button aria-label="缩小" className="ml-[18px] h-[2px] w-3 bg-[#333]" />
      <input
        type="range"
        aria-label="显示比例"
        min={0}
        max={100}
        defaultValue={53}
        className="ml-[14px] h-[2px] w-[114px] appearance-none bg-linear-to-r from-[#2150d8] from-53% to-[#c4c6c4] to-53% [&::-webkit-slider-thumb]:size-[10px] [&::-webkit-slider-thumb]:appearance-none [&::-webkit-slider-thumb]:rounded-full [&::-webkit-slider-thumb]:border-[3px] [&::-webkit-slider-thumb]:border-white [&::-webkit-slider-thumb]:bg-[#8a8a8a]"
      />
      <button aria-label="放大" className="ml-[6px]">
        <Icon className="size-3">
          <path d="M9 2v14M2 9h14" strokeWidth="2.500" />
        </Icon>
      </button>
      <button aria-label="全屏" className="ml-5">
        <Icon className="size-[14px]">
          <path d="M11 1.500h5.500V7M16.500 1.500l-6 6M1.500 11v5.500H7M1.500 16.500l6-6M1.500 5V1.500H5M16.500 13v3.500H13" strokeWidth="1.400" />
        </Icon>
      </button>
    </div>
  </footer>
);

const Watermark = () => (
  <div className="pointer-events-none absolute bottom-[8px] right-[9px] flex items-center gap-[2px] whitespace-nowrap">
    <svg viewBox="0 0 42 42" className="size-[42px]" aria-hidden="true">
      <path d="M41 1C24 1 5 10 1 26c-2 10 8 12 14 9-7 0-7-8-2-15C18 12 28 5 41 1z" fill="#4ba3dc" />
      <path d="M7 38c14 3 32-3 33-15 0-7-8-9-14-7 6 0 8 4 4 10-4 6-13 10-23 12z" fill="#7cc46a" />
      <path d="M12 27c0-7 8-12 14-11-6 2-8 6-7 10 2-4 5-6 8-6-1 6-5 10-10 10-3 0-5-1-5-3z" fill="#3b86c8" />
    </svg>
    <div className="flex flex-col">
      <span className="text-[21px] font-bold leading-[24px] text-[#4f97d2]">极光下载站</span>
      <span className="font-['Liberation_Sans',sans-serif] text-[17px] leading-[18px] text-[#5fbd7a]">www.xz7.com</span>
    </div>
  </div>
);

const App = () => (
  <div className="relative flex h-screen flex-col overflow-hidden bg-[linear-gradient(90deg,#dfe4e8_0%,#e9eaec_35%,#e1e5e9_65%,#e8e9e1_80%,#dfe4e6_100%)] font-['Noto_Sans','Noto_Sans_CJK_SC',sans-serif]">
    <TitleBar />
    <MenuBar />
    <Ribbon />
    <main className="flex min-h-0 flex-1">
      <div className="flex min-w-0 flex-1 flex-col">
        <div className="bg-linear-to-b from-transparent to-[#eee] pb-1">
          <FormulaBar />
        </div>
        <div className="flex min-h-0 flex-1">
          <Sheet />
          <div className="flex flex-col">
            <div className="h-7 bg-[#eee]" />
            <div className="flex min-h-0 flex-1">
              <VerticalScroll />
            </div>
          </div>
        </div>
        <SheetTabs />
      </div>
      <SelectionPane />
      <SideRail />
    </main>
    <StatusBar />
    <div className="absolute bottom-10 right-[37px] flex h-[27px] w-[61px] items-center justify-center gap-1 rounded-md bg-white text-[13px] text-[#222] shadow-[0_0_4px_#333]">
      CH
      <Icon className="size-3">
        <path d="M7 1c4 5 3 10-5 14 9 3 15-2 14-7-1-4-5-6-9-7z" strokeWidth="1.500" />
      </Icon>
      简
    </div>
    <Watermark />
  </div>
);

export default App;
